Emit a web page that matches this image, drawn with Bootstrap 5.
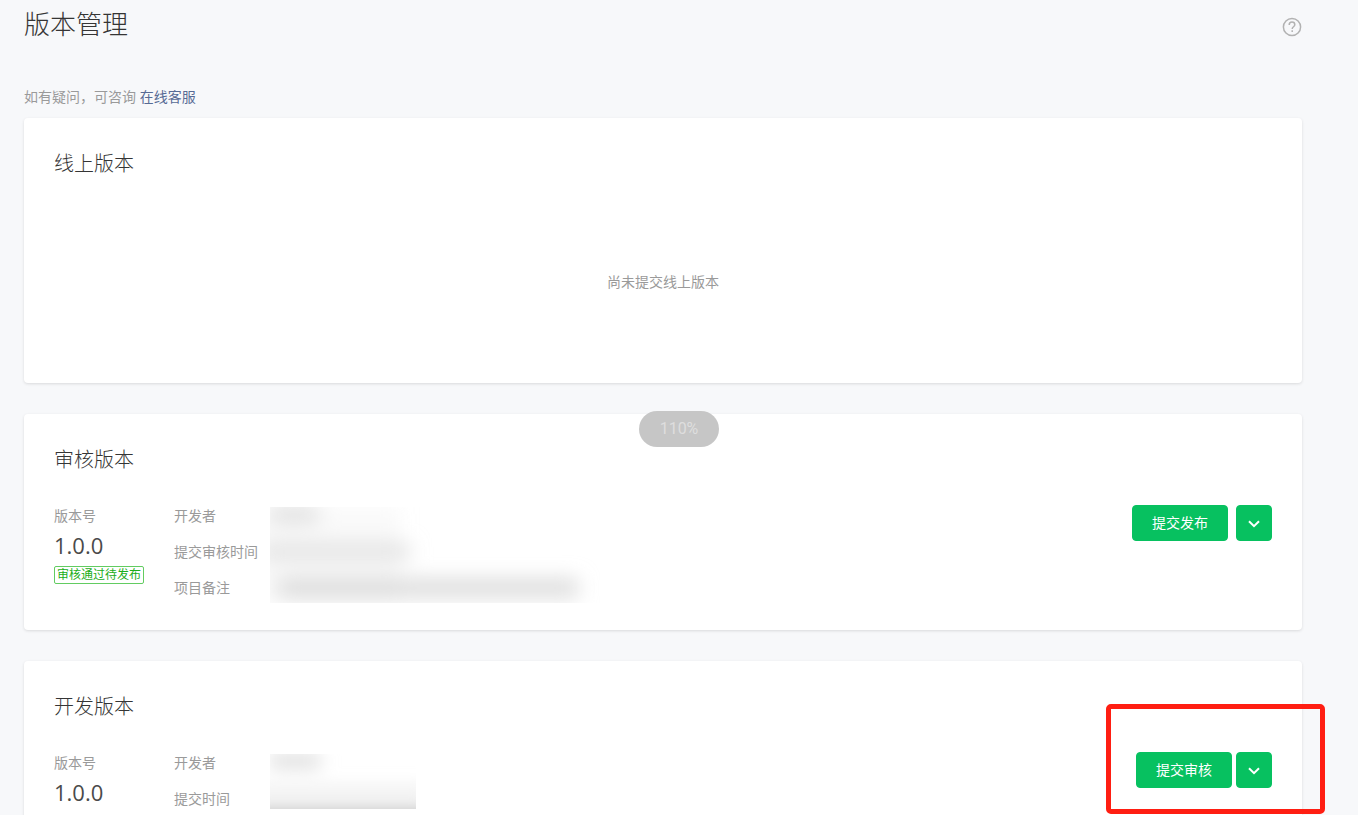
<!DOCTYPE html>
<html lang="zh-CN">
<head>
<meta charset="utf-8">
<meta name="viewport" content="width=device-width, initial-scale=1">
<title>版本管理</title>
<link href="https://cdn.jsdelivr.net/npm/bootstrap@5.3.0/dist/css/bootstrap.min.css" rel="stylesheet">
<style>
  body {
    font-family: "Open Sans", "Noto Sans CJK SC", sans-serif;
    font-size: 14px;
    line-height: 24px;
    color: #9a9a9a;
    background: #f7f8fa;
  }
  .page { height: 100vh; padding: 4px 56px 0 24px; }
  .page-title { font-size: 26px; line-height: 40px; font-weight: 300; color: #353535; }
  .help-btn { color: #b2b2b2; margin-top: 6px; line-height: 0; }
  .intro { margin: 41px 0 9px; }
  .intro a { color: #576b95; }
  .panel {
    border: 0;
    border-radius: 4px;
    padding: 30px 30px 0;
    margin-bottom: 31px;
    box-shadow: 0 1px 3px rgba(0, 0, 0, .12);
    color: inherit;
  }
  .panel h2 { font-size: 20px; line-height: 32px; font-weight: 300; color: #353535; }
  .empty-note { min-height: 203px; }
  .version-row { margin-top: 28px; padding-bottom: 27px; }
  .version-col { width: 120px; }
  .version-no { font-size: 22px; line-height: 32px; margin-top: 1px; color: #4a4a4a; }
  .state-tag {
    font-size: 12px;
    line-height: 16px;
    padding: 0 2px;
    margin-top: 5px;
    color: #1aad19;
    border: 1px solid #62cc61;
    border-radius: 2px;
  }
  .field-labels { width: 96px; row-gap: 12px; }
  .masked { width: 330px; margin-top: 3px; }
  .masked-short { width: 146px; margin-top: 3px; }
  .masked svg, .masked-short svg { display: block; }
  .btn-wx {
    --bs-btn-color: #fff;
    --bs-btn-bg: #07c160;
    --bs-btn-border-color: #07c160;
    --bs-btn-hover-color: #fff;
    --bs-btn-hover-bg: #06ad56;
    --bs-btn-active-color: #fff;
    --bs-btn-active-bg: #06ad56;
    --bs-btn-border-radius: 4px;
    font-size: 14px;
    line-height: 20px;
    height: 36px;
    padding: 0;
  }
  .btn-main { width: 96px; }
  .btn-more { width: 36px; }
  .actions { margin-top: 1px; }
  .highlight-box {
    inset: -48px -53px -26px -30px;
    border: 5px solid #ff1e12;
    border-radius: 5px;
    pointer-events: none;
  }
  .zoom-pill {
    top: 411px;
    width: 80px;
    line-height: 36px;
    font-family: Roboto, sans-serif;
    font-size: 16px;
    color: #dedede;
    background: #c6c6c6;
  }
</style>
</head>
<body>
<main class="page overflow-hidden position-relative">
  <header class="d-flex justify-content-between align-items-start">
    <h1 class="page-title m-0">版本管理</h1>
    <button type="button" class="btn p-0 border-0 help-btn" aria-label="帮助">
      <svg width="20" height="34" viewBox="0 0 20 34" fill="none" stroke="currentColor" stroke-width="1.5">
        <circle cx="10" cy="17" r="8.6"/>
        <path d="M7.2 14.9c0-1.7 1.2-2.8 2.8-2.8s2.8 1.1 2.8 2.6c0 2-2.6 2.1-2.6 4.2"/>
        <path d="M10.2 20.2v1.7"/>
      </svg>
    </button>
  </header>

  <p class="intro">如有疑问，可咨询 <a href="#" class="text-decoration-none">在线客服</a></p>

  <section class="card panel">
    <h2 class="m-0">线上版本</h2>
    <div class="empty-note d-flex align-items-center justify-content-center">尚未提交线上版本</div>
  </section>

  <section class="card panel">
    <h2 class="m-0">审核版本</h2>
    <div class="version-row d-flex align-items-start">
      <div class="version-col d-flex flex-column align-items-start">
        <span>版本号</span>
        <span class="version-no">1.0.0</span>
        <span class="state-tag">审核通过待发布</span>
      </div>
      <div class="field-labels d-flex flex-column text-nowrap">
        <span>开发者</span>
        <span>提交审核时间</span>
        <span>项目备注</span>
      </div>
      <div class="masked">
        <svg width="330" height="96" viewBox="0 0 330 96" aria-hidden="true">
          <defs><filter id="soft" x="-20%" y="-100%" width="140%" height="300%"><feGaussianBlur stdDeviation="10"/></filter></defs>
          <g filter="url(#soft)" fill="#dadada">
            <rect x="0" y="0" width="48" height="14"/>
            <rect x="-8" y="37" width="148" height="15" opacity=".8"/>
            <rect x="8" y="72" width="300" height="18"/>
            <rect x="-20" y="0" width="150" height="96" opacity=".15"/>
          </g>
        </svg>
      </div>
      <div class="actions d-flex gap-2 ms-auto">
        <button type="button" class="btn btn-wx btn-main">提交发布</button>
        <button type="button" class="btn btn-wx btn-more" aria-label="更多操作">
          <svg width="12" height="8" viewBox="0 0 12 8" fill="none" stroke="currentColor" stroke-width="2"><path d="M1 1.2 6 6.2l5-5"/></svg>
        </button>
      </div>
    </div>
  </section>

  <section class="card panel">
    <h2 class="m-0">开发版本</h2>
    <div class="version-row d-flex align-items-start">
      <div class="version-col d-flex flex-column align-items-start">
        <span>版本号</span>
        <span class="version-no">1.0.0</span>
      </div>
      <div class="field-labels d-flex flex-column text-nowrap">
        <span>开发者</span>
        <span>提交时间</span>
      </div>
      <div class="masked-short">
        <svg width="146" height="55" viewBox="0 0 146 55" aria-hidden="true">
          <defs><filter id="softer" x="-20%" y="-150%" width="140%" height="400%"><feGaussianBlur stdDeviation="9"/></filter></defs>
          <g filter="url(#softer)">
            <rect x="0" y="0" width="50" height="14" fill="#dcdcdc"/>
            <rect x="-20" y="34" width="180" height="10" fill="#e8e8e8"/>
            <rect x="-20" y="56" width="190" height="16" fill="#b4b4b4"/>
          </g>
        </svg>
      </div>
      <div class="actions d-flex gap-1 ms-auto position-relative">
        <button type="button" class="btn btn-wx btn-main">提交审核</button>
        <button type="button" class="btn btn-wx btn-more" aria-label="更多操作">
          <svg width="12" height="8" viewBox="0 0 12 8" fill="none" stroke="currentColor" stroke-width="2"><path d="M1 1.2 6 6.2l5-5"/></svg>
        </button>
        <div class="highlight-box position-absolute"></div>
      </div>
    </div>
  </section>

  <div class="zoom-pill position-absolute start-50 translate-middle-x rounded-pill text-center">110%</div>
</main>
<script src="https://cdn.jsdelivr.net/npm/bootstrap@5.3.0/dist/js/bootstrap.bundle.min.js"></script>
</body>
</html>
